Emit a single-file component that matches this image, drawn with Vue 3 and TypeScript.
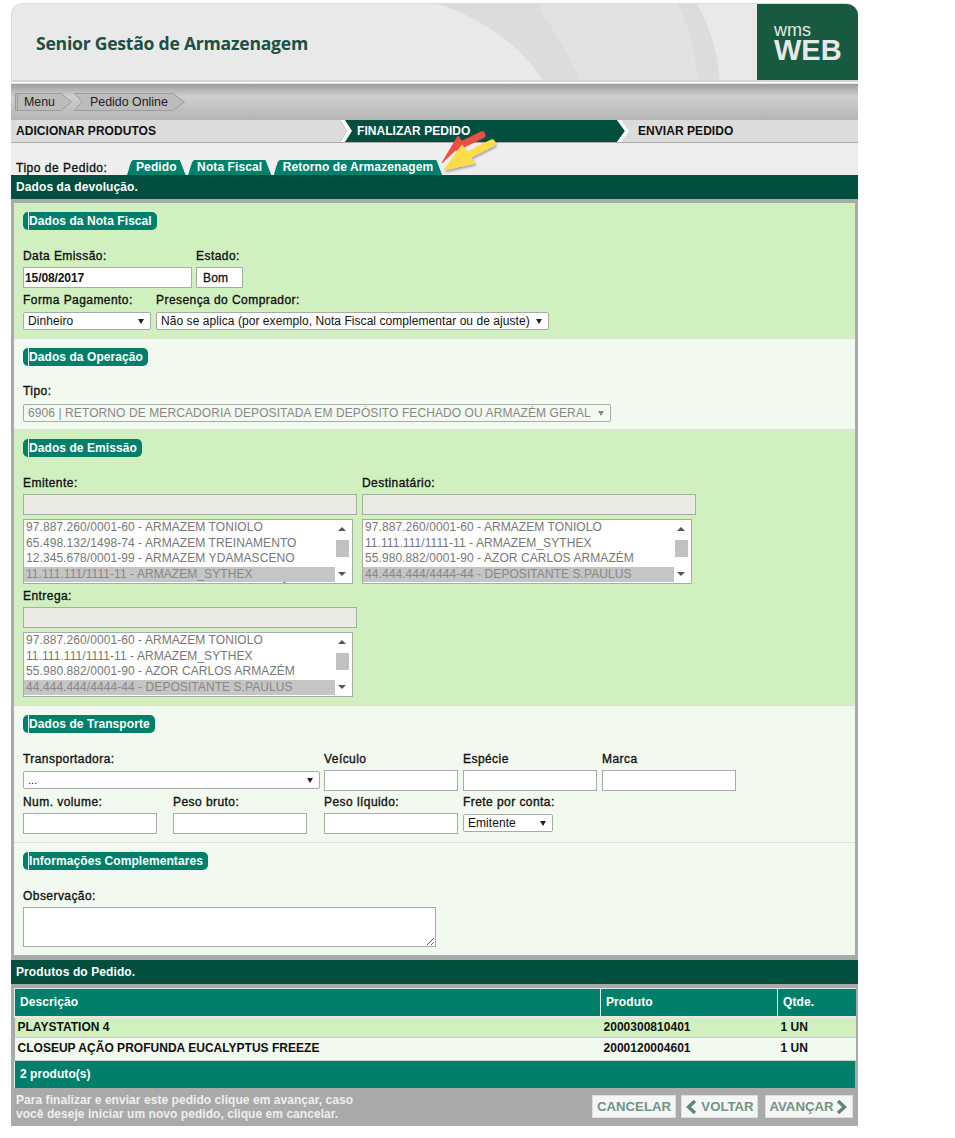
<script setup lang="ts">
interface Product { descricao: string; produto: string; qtde: string }

const tabs: string[] = ['Pedido', 'Nota Fiscal', 'Retorno de Armazenagem']

const emitentes: string[] = [
  '97.887.260/0001-60 - ARMAZEM TONIOLO',
  '65.498.132/1498-74 - ARMAZEM TREINAMENTO',
  '12.345.678/0001-99 - ARMAZEM YDAMASCENO',
  '11.111.111/1111-11 - ARMAZEM_SYTHEX',
]
const destinatarios: string[] = [
  '97.887.260/0001-60 - ARMAZEM TONIOLO',
  '11.111.111/1111-11 - ARMAZEM_SYTHEX',
  '55.980.882/0001-90 - AZOR CARLOS ARMAZÉM',
  '44.444.444/4444-44 - DEPOSITANTE S.PAULUS',
]
const products: Product[] = [
  { descricao: 'PLAYSTATION 4', produto: '2000300810401', qtde: '1 UN' },
  { descricao: 'CLOSEUP AÇÃO PROFUNDA EUCALYPTUS FREEZE', produto: '2000120004601', qtde: '1 UN' },
]
const lists = { emitentes, destinatarios }
</script>

<template>
  <div class="page">
    <header class="banner">
      <svg class="arcs" viewBox="0 0 746 79" aria-hidden="true">
        <path d="M425 0 C465 12 510 40 532 79 L708 79 C706 50 698 22 685 0 Z" fill="#dcdcdc" />
        <path d="M528 0 L528 7 C545 30 560 55 569 79 L686 79 C684 50 678 22 665 0 Z" fill="#e2e2e2" />
      </svg>
      <h1 class="title">Senior Gestão de Armazenagem</h1>
      <div class="logo"><span class="wms">wms</span><span class="web">WEB</span></div>
    </header>

    <nav class="crumbs">
      <a class="crumb first">
        <svg class="crumb-bg" viewBox="0 0 57 18" preserveAspectRatio="none" aria-hidden="true"><path d="M.5 .5H46L56.5 9 46 17.5H.5Z" /><path d="M2.5 .5V17.5" /></svg>
        <span>Menu</span>
      </a>
      <a class="crumb second">
        <svg class="crumb-bg" viewBox="0 0 111 18" preserveAspectRatio="none" aria-hidden="true"><path d="M.5 .5H99L110.5 9 99 17.5H.5L8 9Z" /></svg>
        <span>Pedido Online</span>
      </a>
    </nav>

    <ol class="steps">
      <li class="step step-a">ADICIONAR PRODUTOS</li>
      <li class="step step-b">
        <svg class="chev" viewBox="0 0 16 22" aria-hidden="true"><path d="M0 0H3L10 11 3 22H0Z" fill="#dcdcdc" /><path d="M3 0H8L15 11 8 22H3L10 11Z" fill="#fff" /></svg>
        FINALIZAR PEDIDO
      </li>
      <li class="step step-c">
        <svg class="chev" viewBox="0 0 16 22" aria-hidden="true"><path d="M0 0L8 11 0 22Z" fill="#004f3f" /><path d="M0 0H4L12 11 4 22H0L8 11Z" fill="#fff" /></svg>
        ENVIAR PEDIDO
      </li>
    </ol>

    <div class="tabbar">
      <span class="tab-label">Tipo de Pedido:</span>
      <div class="tabs">
        <span v-for="t in tabs" :key="t" class="tab">{{ t }}</span>
      </div>
      <svg class="pointer" viewBox="0 0 70 50" aria-hidden="true">
        <defs>
          <filter id="sh" x="-20%" y="-20%" width="150%" height="150%"><feDropShadow dx="1" dy="2" stdDeviation="1.2" flood-color="#000" flood-opacity=".3" /></filter>
        </defs>
        <g fill="#ea4f45" stroke="#ea4f45">
          <path d="M2 28 L18 1 L23 8 Z" stroke-width="1" />
          <path d="M17 12 L42 0" stroke-width="7" stroke-linecap="round" />
        </g>
        <g fill="#fddb4c" stroke="#fddb4c" filter="url(#sh)">
          <path d="M4 35 L22 10 L35 28 Z" stroke-width="1" />
          <path d="M24 22 L52 8" stroke-width="7" stroke-linecap="round" />
        </g>
      </svg>
    </div>

    <div class="bar">Dados da devolução.</div>

    <main class="frame">
      <section class="sec green sec-nf">
        <h2 class="pill">Dados da Nota Fiscal</h2>
        <div class="row r1">
          <label class="field w169"><span>Data Emissão:</span><input class="inp strong" value="15/08/2017" /></label>
          <label class="field w47"><span>Estado:</span><input class="inp strong pad" value="Bom" /></label>
        </div>
        <div class="row r2">
          <label class="field w128"><span>Forma Pagamento:</span>
            <span class="sel"><select><option>Dinheiro</option></select></span>
          </label>
          <label class="field w393"><span>Presença do Comprador:</span>
            <span class="sel"><select><option>Não se aplica (por exemplo, Nota Fiscal complementar ou de ajuste)</option></select></span>
          </label>
        </div>
      </section>

      <section class="sec light sec-op">
        <h2 class="pill">Dados da Operação</h2>
        <div class="row r3">
          <label class="field w588"><span>Tipo:</span>
            <span class="sel off"><select disabled><option>6906 | RETORNO DE MERCADORIA DEPOSITADA EM DEPÓSITO FECHADO OU ARMAZÉM GERAL</option></select></span>
          </label>
        </div>
      </section>

      <section class="sec green sec-em">
        <h2 class="pill">Dados de Emissão</h2>
        <div class="row r4">
          <div class="field w334">
            <span>Emitente:</span>
            <input class="inp ro" readonly />
            <div class="listbox more">
              <ul>
                <li v-for="(o, i) in lists.emitentes" :key="o" :class="{ picked: i === 3 }">{{ o }}</li>
              </ul>
              <div class="sb"><i class="up" /><b /><i class="down" /></div>
            </div>
          </div>
          <div class="field w334">
            <span>Destinatário:</span>
            <input class="inp ro" readonly />
            <div class="listbox">
              <ul>
                <li v-for="(o, i) in lists.destinatarios" :key="o" :class="{ picked: i === 3 }">{{ o }}</li>
              </ul>
              <div class="sb"><i class="up" /><b /><i class="down" /></div>
            </div>
          </div>
        </div>
        <div class="row r5">
          <div class="field w334">
            <span>Entrega:</span>
            <input class="inp ro" readonly />
            <div class="listbox">
              <ul>
                <li v-for="(o, i) in lists.destinatarios" :key="o" :class="{ picked: i === 3 }">{{ o }}</li>
              </ul>
              <div class="sb"><i class="up" /><b /><i class="down" /></div>
            </div>
          </div>
        </div>
      </section>

      <section class="sec light sec-tr">
        <h2 class="pill">Dados de Transporte</h2>
        <div class="row r6">
          <label class="field w297"><span>Transportadora:</span>
            <span class="sel"><select><option>...</option></select></span>
          </label>
          <label class="field w134 m4"><span>Veículo</span><input class="inp" /></label>
          <label class="field w134 m5"><span>Espécie</span><input class="inp" /></label>
          <label class="field w134 m5"><span>Marca</span><input class="inp" /></label>
        </div>
        <div class="row r7">
          <label class="field w134"><span>Num. volume:</span><input class="inp" /></label>
          <label class="field w134 m16"><span>Peso bruto:</span><input class="inp" /></label>
          <label class="field w134 m17"><span>Peso líquido:</span><input class="inp" /></label>
          <label class="field w90 m5"><span>Frete por conta:</span>
            <span class="sel fr"><select><option>Emitente</option></select></span>
          </label>
        </div>
      </section>

      <section class="sec light sec-info">
        <h2 class="pill">Informações Complementares</h2>
        <label class="field obs"><span>Observação:</span><textarea class="ta"></textarea></label>
      </section>
    </main>

    <div class="bar bar2">Produtos do Pedido.</div>

    <div class="products">
      <table>
        <thead>
          <tr><th class="c1">Descrição</th><th class="c2">Produto</th><th class="c3">Qtde.</th></tr>
        </thead>
        <tbody>
          <tr v-for="(p, i) in products" :key="p.produto" :class="i === 0 ? 'g' : 'l'">
            <td>{{ p.descricao }}</td><td>{{ p.produto }}</td><td>{{ p.qtde }}</td>
          </tr>
        </tbody>
      </table>
      <div class="count">2 produto(s)</div>
    </div>

    <footer class="foot">
      <p>Para finalizar e enviar este pedido clique em avançar, caso<br />você deseje iniciar um novo pedido, clique em cancelar.</p>
      <div class="btns">
        <button class="btn b1">CANCELAR</button>
        <button class="btn b2">
          <svg viewBox="0 0 12 14" aria-hidden="true"><path d="M10 1L3.5 7 10 13" /></svg>VOLTAR
        </button>
        <button class="btn b3">AVANÇAR
          <svg viewBox="0 0 12 14" aria-hidden="true"><path d="M2 1L8.5 7 2 13" /></svg>
        </button>
      </div>
    </footer>
  </div>
</template>

<style>
html, body { margin: 0; background: #fff; }
</style>

<style scoped>
* { box-sizing: border-box; }
.page {
  width: 847px; margin: 3px 0 0 11px; height: 1123px;
  font: 12px/14px "Liberation Sans", Arial, sans-serif; color: #111;
  position: relative;
}
.banner {
  height: 79px; background: #e9e9e9; border-radius: 12px 12px 0 0; border-left: 1px solid #d8d8d8;
  position: relative; overflow: hidden; display: flex; align-items: center; justify-content: space-between;
  border-top: 1px solid #dcdcdc; border-bottom: 2px solid #d4d4d4;
}
.arcs { position: absolute; left: 0; top: 0; width: 746px; height: 79px; }
.title {
  margin: 2px 0 0 24px; position: relative; font: 700 17.6px/22px "Open Sans", sans-serif; color: #1d4f44; letter-spacing: -.25px;
}
.logo {
  position: relative; width: 101px; height: 79px; background: #175a40; color: #e8e8e8;
  display: flex; flex-direction: column; padding: 20px 0 0 17px; font-family: "Liberation Sans", sans-serif;
}
.wms { font-size: 18px; line-height: 14px; }
.web { font-size: 29px; line-height: 25px; font-weight: 700; margin-top: 1px; }
.crumbs {
  height: 37px; margin-top: 1px; border-top: 1px solid #e4e4e4; display: flex; align-items: flex-start; padding: 9px 0 0 4px;
  background: linear-gradient(#9e9e9e, #cfcfcf 35%, #c6c6c6 55%, #b5b5b5);
}
.crumb { position: relative; height: 18px; display: flex; align-items: center; font-size: 12.4px; color: #222; }
.crumb-bg { position: absolute; left: 0; top: 0; width: 100%; height: 100%; }
.crumb-bg path { fill: #bcbcbc; stroke: #9c9c9c; }
.crumb span { position: relative; }
.first { width: 57px; padding-left: 9px; }
.second { width: 111px; margin-left: 2px; padding-left: 16px; }
.steps { margin: 0; padding: 0; list-style: none; display: flex; height: 23px; border-bottom: 1px solid #aaa; background: #dcdcdc; }
.step { position: relative; font-weight: 700; font-size: 12px; line-height: 22px; letter-spacing: .05px; height: 22px; }
.step-a { width: 326px; padding-left: 5px; }
.step-b { width: 280px; padding-left: 20px; background: #004f3f; color: #fff; }
.step-c { flex: 1; padding-left: 21px; }
.chev { position: absolute; left: 0; top: 0; width: 16px; height: 22px; }
.tabbar { height: 32px; background: #eee; position: relative; display: flex; align-items: flex-end; padding-left: 5px; }
.tab-label { font-size: 12px; letter-spacing: .52px; width: 111px; line-height: 14px; -webkit-text-stroke: .35px #111; }
.tabs { display: flex; gap: 2.5px; }
.tab {
  height: 15px; color: #fff; background: #00806a; font-weight: 700; font-size: 12px; line-height: 14px; letter-spacing: .1px;
  padding: 0 9px 0 9px;
  clip-path: polygon(0 100%, 4px 2px, 6px 0, calc(100% - 6px) 0, calc(100% - 5px) 2px, 100% 100%);
}
.pointer { position: absolute; left: 429px; top: -8px; width: 70px; height: 50px; overflow: visible; }
.bar { height: 24px; background: #004f3f; color: #fff; font-weight: 700; padding-left: 5px; line-height: 24px; letter-spacing: .1px; }
.bar2 { background: linear-gradient(#004f3f, #004f3f 60%, #045040); }
.frame { background: #aaa; padding: 4px 3px 5px; }
.sec { padding: 9px 9px 0; border-bottom: 1px solid #dcdcdc; }
.sec:last-child { border-bottom: 0; }
.green { background: #d1f0c0; }
.light { background: #f2f9ef; }
.sec-nf { height: 136px; }
.sec-op { height: 91px; }
.sec-em { height: 276px; }
.sec-tr { height: 137px; }
.sec-info { height: 112px; }
.pill {
  margin: 0; height: 18px; width: max-content; background: #00806a; color: #fff; border-radius: 5px;
  font: 700 12px/18px "Liberation Sans", sans-serif; letter-spacing: .07px; padding: 0 5px 0 6px; border: 0; position: relative;
}
.pill::before { content: ""; position: absolute; left: 5px; top: 0; bottom: 0; width: 1px; background: #e6f4ef; }
.row { display: flex; gap: 4px; }
.field { display: flex; flex-direction: column; }
.field > span:first-child { height: 14px; line-height: 14px; letter-spacing: .44px; -webkit-text-stroke: .35px #111; white-space: nowrap; margin-bottom: 4px; }
.w169 { width: 169px; } .w47 { width: 47px; } .w128 { width: 128px; } .w393 { width: 393px; }
.w588 { width: 588px; } .w334 { width: 334px; } .w297 { width: 297px; } .w134 { width: 134px; } .w90 { width: 90px; }
.m4 { margin-left: 0; } .m5 { margin-left: 1px; } .m16 { margin-left: 12px; } .m17 { margin-left: 13px; }
.r1 { margin-top: 19px; }
.r2 { margin-top: 5px; gap: 5px; }
.r2 .field > span:first-child { margin-bottom: 5px; }
.r3 { margin-top: 18px; }
.r3 .field > span:first-child { margin-bottom: 6px; }
.r4 { margin-top: 19px; gap: 5px; }
.r5 { margin-top: 5px; }
.r6 { margin-top: 19px; }
.r7 { margin-top: 4px; }
.inp { height: 21px; width: 100%; border: 1px solid #aaa; background: #fff; font: 12px "Liberation Sans", sans-serif; padding: 0 1px; color: #111; outline: 0; }
.strong { font-weight: 700; letter-spacing: -.1px; }
.strong.pad { padding-left: 6px; font-weight: 400; -webkit-text-stroke: .3px #111; font-size: 12px; letter-spacing: .2px; }
.ro { background: #ebebe4; }
.sel { display: block; position: relative; height: 18px; }
.sel select {
  appearance: none; width: 100%; height: 18px; background: #fff; border: 1px solid #aaa; border-radius: 2px;
  font: 12px "Liberation Sans", sans-serif; padding: 0 0 0 4px; color: #111; letter-spacing: .06px; opacity: 1; outline: 0;
}
.sel::after {
  content: ""; position: absolute; right: 7px; top: 6.5px; width: 0; height: 0;
  border-left: 3.5px solid transparent; border-right: 3.5px solid transparent; border-top: 5.5px solid #222;
}
.off select { color: #888; border-color: #aaa; background: #f2f9ef; letter-spacing: .09px; }
.off::after { border-top-color: #888; }
.fr { margin-top: 1px; }
.r6 .sel { margin-top: 1px; }
.r6 .w297 .sel select { font-size: 11px; }
.listbox {
  margin-top: 4px; width: 330px; height: 65px; border: 1px solid #aaa; background: #fff; display: flex; overflow: hidden; position: relative;
}
.more::after { content: ""; position: absolute; left: 259px; bottom: 0; width: 3px; height: 1px; background: #999; }
.listbox ul { flex: 1; margin: 0; padding: 0; list-style: none; color: #777; font-size: 12px; letter-spacing: .07px; line-height: 14px; }
.listbox li { height: 15.6px; padding-left: 2px; white-space: nowrap; overflow: hidden; }
.picked { background: #c5c5c5; color: #888; }
.sb { width: 17px; background: #fff; display: flex; flex-direction: column; align-items: center; position: relative; }
.sb b { position: absolute; left: 1px; top: 20px; width: 13px; height: 17px; background: #c1c1c1; }
.sb i { position: absolute; left: 3px; width: 0; height: 0; border-left: 4px solid transparent; border-right: 4px solid transparent; }
.sb .up { top: 7px; border-bottom: 4px solid #555; }
.sb .down { bottom: 7px; border-top: 4px solid #555; }
.obs { margin-top: 19px; }
.ta { width: 413px; height: 40px; border: 1px solid #aaa; background: #fff; display: block; outline: 0; }
.products { background: #aaa; padding: 4px 3px 0; }
table { border-collapse: collapse; width: 841px; table-layout: fixed; }
th { background: #00806a; color: #fff; height: 28px; text-align: left; font-size: 12px; letter-spacing: .1px; padding: 0 0 1px 5px; border-left: 1px solid #d9ece5; border-top: 1px solid #d9ece5; border-bottom: 2px solid #e8e8e8; }
.c1 { width: 586px; } .c2 { width: 177px; } .c3 { width: 78px; }
td { font-weight: 700; padding: 0 0 0 3px; border-bottom: 1px solid #ccc; font-size: 12px; letter-spacing: .02px; }
.g td { background: #d1f0c0; height: 21px; }
.l td { background: #f2f9ef; height: 23px; padding-bottom: 2px; }
.count { height: 27px; background: #00806a; color: #fff; font-weight: 700; line-height: 27px; padding-left: 5px; border-left: 1px solid #d9ece5; width: 841px; letter-spacing: .05px; }
.foot { height: 38px; background: #aaa; display: flex; justify-content: space-between; padding: 5px 5px 0 5px; color: #eee; font-weight: 700; }
.foot p { margin: 0; line-height: 14px; font-size: 12px; letter-spacing: .05px; }
.btns { display: flex; gap: 5px; margin-top: 2px; }
.btn { height: 23px; border: 1px solid #ddd; background: #f5f5f5; color: #6d9585; font: 700 13.2px/21px "Liberation Sans", sans-serif; padding: 0; display: flex; align-items: center; justify-content: center; gap: 3px; }
.btn svg { width: 12px; height: 14px; fill: none; stroke: #5d8878; stroke-width: 3.4; }
.b1 { width: 84px; }
.b2 { width: 77px; margin-right: 2px; gap: 4px; }
.b3 { width: 88px; }
</style>
